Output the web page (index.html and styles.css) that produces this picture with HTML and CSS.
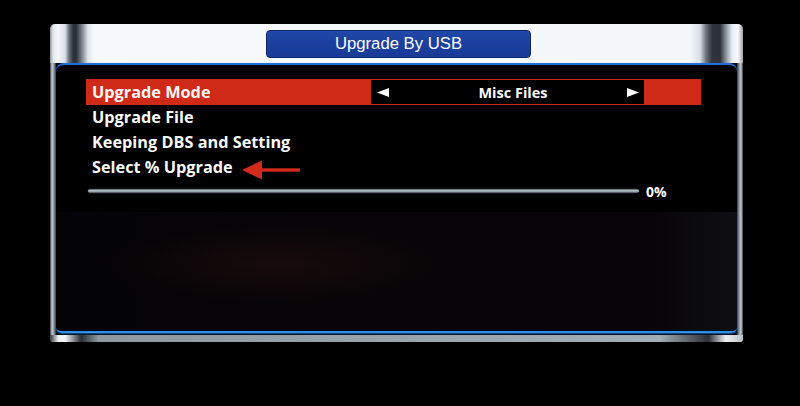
FILE: index.html
```html
<!DOCTYPE html>
<html>
<head>
<meta charset="utf-8">
<link rel="stylesheet" href="styles.css">
</head>
<body>
<div class="screen">
  <div class="frame">
    <div class="header">
      <div class="title">Upgrade By USB</div>
    </div>
    <div class="body">
      <div class="panel">
        <div class="menu">
          <div class="row row-active">
            <span class="label">Upgrade Mode</span>
            <div class="selector">
              <svg class="arrow" width="12" height="9" viewBox="0 0 12 9"><polygon points="0,4.5 12,0 12,9" fill="#fff"/></svg>
              <span class="value">Misc Files</span>
              <svg class="arrow" width="12" height="9" viewBox="0 0 12 9"><polygon points="12,4.5 0,0 0,9" fill="#fff"/></svg>
            </div>
          </div>
          <div class="row"><span class="label">Upgrade File</span></div>
          <div class="row"><span class="label">Keeping DBS and Setting</span></div>
          <div class="row">
            <span class="label">Select % Upgrade</span>
            <svg class="pointer" width="58" height="20" viewBox="0 0 58 20">
              <polygon points="0,10 20,0.5 20,19.5" fill="#d32a1b"/>
              <rect x="19" y="8.3" width="39" height="3.4" fill="#d32a1b"/>
            </svg>
          </div>
          <div class="progress">
            <div class="bar"></div>
            <span class="percent">0%</span>
          </div>
        </div>
        <div class="lower"></div>
      </div>
    </div>
  </div>
</div>
</body>
</html>
```

FILE: styles.css
```css
html, body {
  margin: 0;
  padding: 0;
  background: #000;
}
.screen {
  width: 800px;
  height: 406px;
  background: #000;
  padding-top: 24px;
  box-sizing: border-box;
  overflow: hidden;
}
.frame {
  margin-left: 50px;
  width: 693px;
  height: 318px;
  border-radius: 5px 5px 3px 3px;
  display: flex;
  flex-direction: column;
  overflow: hidden;
}
.header {
  height: 39px;
  flex: none;
  box-sizing: border-box;
  padding-top: 6px;
  padding-left: 216px;
  background: linear-gradient(to right,
    #8e969c 0px, #dfe6eb 3px, #f4f8fb 8px, #d9e0e6 15px,
    #6b727c 19px, #2e323c 23px, #2a2e38 26px, #7c838c 32px,
    #dfe6ec 38px, #f5f9fc 44px,
    #f4f8fb 640px, #d8dfe6 650px, #6d7580 656px, #30343e 662px,
    #2c303a 670px, #8b939c 676px, #e6edf2 682px, #f6fafc 688px, #9aa2a8 693px);
}
.title {
  width: 265px;
  height: 28px;
  box-sizing: border-box;
  border: 1px solid #0c2463;
  border-radius: 4px;
  background: linear-gradient(to bottom, #2148a9, #1a3f9e 50%, #183b96);
  color: #fff;
  font-family: "Liberation Sans", Arial, sans-serif;
  font-size: 16.7px;
  line-height: 26px;
  text-align: center;
}
.body {
  flex: 1;
  display: flex;
  flex-direction: column;
  padding: 0 6px 9px 6px;
  background:
    linear-gradient(to right, #30363c 0, #eef2f4 1.2%, #f2f6f8 2.2%, #2a2e34 4.5%, #8e98a0 7%, #a3adb4 88%, #2c3036 95%, #eef2f4 97.5%, #b8c0c6 100%) bottom / 100% 7px no-repeat,
    linear-gradient(to right, #30363c 0px, #c4ccd2 2px, #8a949c 4px, #2a2e34 6px, #000 6px, #000 calc(100% - 6px), #2a2e34 calc(100% - 6px), #8a949c calc(100% - 4px), #c4ccd2 calc(100% - 2px), #30363c 100%);
  background-color: #000;
}
.panel {
  flex: 1;
  display: flex;
  flex-direction: column;
  background: #000;
  border-top: 2px solid #1f6fdc;
  border-bottom: 2px solid #2a8ff4;
  border-radius: 8px 8px 6px 6px;
  box-shadow: 0 1px 2px rgba(60,150,255,0.6);
  overflow: hidden;
}
.menu {
  padding: 14px 0 0 30px;
  width: 615px;
  font-family: "Open Sans", "DejaVu Sans", sans-serif;
  font-weight: 700;
  color: #fafafa;
}
.row {
  height: 25px;
  display: flex;
  align-items: center;
  font-size: 16.3px;
  padding-left: 6px;
}
.row-active {
  height: 26px;
  background: #cf2918;
  padding-right: 57px;
}
.label {
  display: block;
  line-height: 25px;
  flex: none;
}
.row-active .label {
  width: 279px;
}
.selector {
  flex: 1;
  align-self: stretch;
  margin: 1px 0;
  background: #000;
  display: flex;
  align-items: center;
  padding: 0 5px 0 6px;
}
.arrow {
  flex: none;
  display: block;
}
.value {
  flex: 1;
  text-align: center;
  padding-left: 10px;
  font-size: 14.5px;
}
.pointer {
  margin-left: 9px;
  margin-top: 4px;
  flex: none;
}
.progress {
  height: 22px;
  display: flex;
  align-items: center;
  padding-left: 2px;
}
.bar {
  width: 551px;
  height: 4px;
  border-radius: 2px;
  background: linear-gradient(to bottom, #4a5258, #b4c2c8 40%, #8e9ca4 70%, #3a4046);
  box-shadow: 0 0 2px rgba(120,130,140,0.5);
}
.percent {
  margin-left: 7px;
  font-size: 14px;
  color: #fff;
}
.lower {
  flex: 1;
  margin-top: 10px;
  background:
    radial-gradient(ellipse 170px 40px at 220px 52px, rgba(30,12,14,0.7), rgba(0,0,0,0) 100%),
    linear-gradient(to right, #040305 0%, #070507 40%, #070507 88%, #0f0f12 100%);
}
```
